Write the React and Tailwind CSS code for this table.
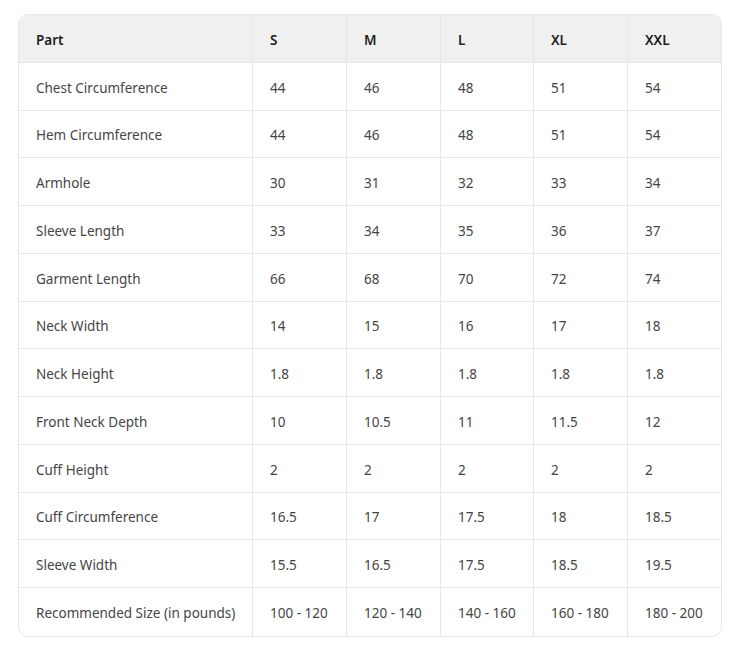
import React from 'react';

const sizes = ['S', 'M', 'L', 'XL', 'XXL'];

const rows = [
  ['Chest Circumference', '44', '46', '48', '51', '54'],
  ['Hem Circumference', '44', '46', '48', '51', '54'],
  ['Armhole', '30', '31', '32', '33', '34'],
  ['Sleeve Length', '33', '34', '35', '36', '37'],
  ['Garment Length', '66', '68', '70', '72', '74'],
  ['Neck Width', '14', '15', '16', '17', '18'],
  ['Neck Height', '1.8', '1.8', '1.8', '1.8', '1.8'],
  ['Front Neck Depth', '10', '10.5', '11', '11.5', '12'],
  ['Cuff Height', '2', '2', '2', '2', '2'],
  ['Cuff Circumference', '16.5', '17', '17.5', '18', '18.5'],
  ['Sleeve Width', '15.5', '16.5', '17.5', '18.5', '19.5'],
  ['Recommended Size (in pounds)', '100 - 120', '120 - 140', '140 - 160', '160 - 180', '180 - 200'],
];

const Cell = ({ children, last, bottom, head }) => (
  <div
    className={
      'h-[47.75px] flex items-center pl-[17px] pt-[3px] border-[#e6e6e6] ' +
      (last ? '' : 'border-r ') +
      (bottom ? '' : 'border-b ') +
      (head ? 'bg-[#f0f0f0] font-semibold text-[#1f1f1f]' : 'text-[#454545]')
    }
  >
    {children}
  </div>
);

export default function App() {
  return (
    <div className="bg-white min-h-[647px] pt-[14px] pl-[18px]" style={{ fontFamily: '"Noto Sans", "Open Sans", sans-serif' }}>
      <div className="w-[704px] rounded-[10px] border border-[#e6e6e6] overflow-hidden text-[13.5px]">
        <div className="grid grid-cols-[234px_94px_94px_93px_94px_1fr]">
          <Cell head>Part</Cell>
          {sizes.map((s, i) => (
            <Cell key={s} head last={i === sizes.length - 1}>{s}</Cell>
          ))}
          {rows.map((r, ri) =>
            r.map((v, ci) => (
              <Cell key={ri + '-' + ci} last={ci === r.length - 1} bottom={ri === rows.length - 1}>
                {v}
              </Cell>
            ))
          )}
        </div>
      </div>
    </div>
  );
}
